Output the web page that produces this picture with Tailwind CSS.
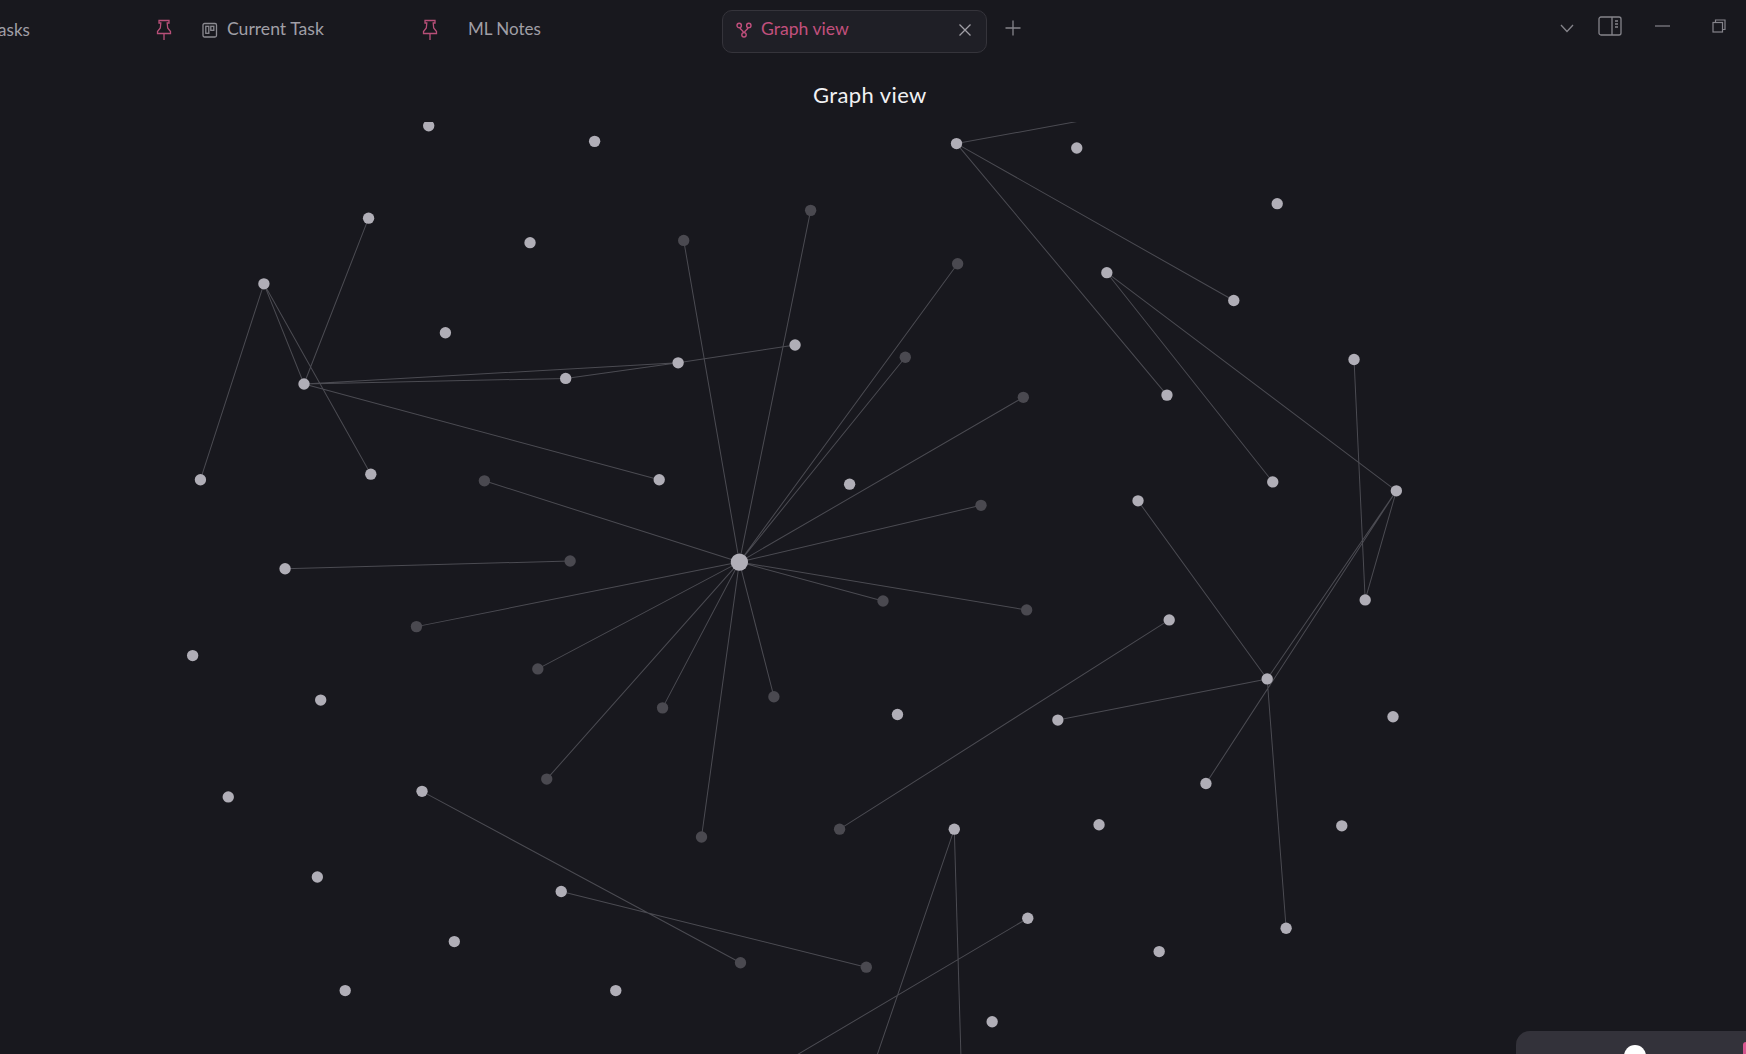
<!doctype html>
<html lang="en">
<head>
<meta charset="utf-8">
<title>Graph view</title>
<script src="https://cdn.jsdelivr.net/npm/@tailwindcss/browser@4"></script>
</head>
<body class="bg-[#18181e] overflow-hidden">
<div class="relative w-[1746px] h-[1054px] overflow-hidden bg-[#18181e] font-['Lato','Liberation_Sans',sans-serif]">

  <!-- Tab bar -->
  <div class="flex items-start h-[62px] pt-[10px] -ml-[76px] text-[17px] text-[#a09fa6]">
    <div class="flex items-center justify-between w-[266px] h-[43px] pl-[66px] pr-[18px] pb-[4px] shrink-0">
      <span>Tasks</span>
      <svg class="w-[16px] h-[22px] text-[#b84f79]" viewBox="0 0 16 22" fill="none" stroke="currentColor" stroke-width="1.300"><path d="M3 1.500h10V4h-1.800l.5 5 2.800 3.500v2H1.500v-2L4.300 9l.5-5H3zM8 14.500V21"/></svg>
    </div>
    <div class="flex items-center w-[266px] h-[43px] pl-[12px] pr-[18px] pb-[4px] shrink-0">
      <svg class="w-[16px] h-[16px] mr-[9px] mt-[1px] text-[#8b8a91]" viewBox="0 0 16 16" fill="none" stroke="currentColor" stroke-width="1.300"><rect x="1" y="1.500" width="13.500" height="13.500" rx="1.500"/><rect x="3.800" y="4.300" width="3" height="7"/><rect x="8.800" y="4.300" width="3" height="4"/></svg>
      <span class="text-[17.600px]">Current Task</span>
      <svg class="ml-auto w-[16px] h-[22px] text-[#b84f79]" viewBox="0 0 16 22" fill="none" stroke="currentColor" stroke-width="1.300"><path d="M3 1.500h10V4h-1.800l.5 5 2.800 3.500v2H1.500v-2L4.300 9l.5-5H3zM8 14.500V21"/></svg>
    </div>
    <div class="flex items-center w-[266px] h-[43px] pl-[12px] pb-[5px] shrink-0"><span>ML Notes</span></div>
    <div class="flex items-center w-[265px] h-[43px] pl-[13px] pr-[14px] pb-[4px] shrink-0 rounded-[10px] border border-[#35343b] bg-[#1f1f26] text-[#c2507d]">
      <svg class="w-[16px] h-[16px] mr-[9px]" viewBox="0 0 16 16" fill="none" stroke="currentColor" stroke-width="1.400"><circle cx="3.200" cy="3.400" r="2.200"/><circle cx="12.800" cy="3.400" r="2.200"/><circle cx="8" cy="12.800" r="2.200"/><path d="M3.800 5.500C4.500 8 7 8 7.600 10.600M12.200 5.500C11.500 8 9 8 8.400 10.600"/></svg>
      <span class="text-[17.600px]">Graph view</span>
      <svg class="ml-auto w-[14px] h-[14px] text-[#a09fa6]" viewBox="0 0 14 14" fill="none" stroke="currentColor" stroke-width="1.300"><path d="M1.500 1.500l11 11M12.500 1.500l-11 11"/></svg>
    </div>
    <button class="ml-[18px] mt-[10px] w-[16px] h-[16px] text-[#85848b]">
      <svg viewBox="0 0 16 16" fill="none" stroke="currentColor" stroke-width="1.300"><path d="M8 0.500v15M0.500 8h15"/></svg>
    </button>
    <div class="ml-auto flex items-center h-[32px] pr-[20px] text-[#85848b]">
      <svg class="w-[14px] h-[9px] mr-[24px] mt-[4px]" viewBox="0 0 14 9" fill="none" stroke="currentColor" stroke-width="1.300"><path d="M1 1l6 6.500L13 1"/></svg>
      <svg class="w-[24px] h-[20px] mr-[33px]" viewBox="0 0 24 20" fill="none" stroke="currentColor" stroke-width="1.300"><rect x="1" y="1" width="22" height="18" rx="2"/><path d="M14 1v18M17 5h3M17 8h3M17 11h3"/></svg>
      <svg class="w-[15px] h-[2px] mr-[42px]" viewBox="0 0 15 2" fill="none" stroke="currentColor" stroke-width="1.200"><path d="M0 1h15"/></svg>
      <svg class="w-[14px] h-[14px]" viewBox="0 0 14 14" fill="none" stroke="currentColor" stroke-width="1.200"><rect x="1" y="3.500" width="9.500" height="9.500"/><path d="M3.500 3.500V1H13v9.500h-2.500"/></svg>
    </div>
  </div>

  <!-- View title -->
  <h1 class="ml-[813px] mt-[17px] w-[125px] h-[40px] text-[22px] leading-[32px] tracking-[0.4px] text-[#f1f1f3] font-normal whitespace-nowrap">Graph view</h1>

  <!-- Graph canvas -->
  <svg class="absolute left-0 top-[122px] w-[1746px] h-[932px]" viewBox="0 109.600 1568 837.400" preserveAspectRatio="none" fill="none">
    <g stroke="#4b4b52" stroke-width="0.900">
      <path d="M664 505L614 216M664 505L728 189M664 505L860 237M664 505L813 321M664 505L919 357M664 505L881 454M664 505L922 548M664 505L793 540M664 505L695 626M664 505L630 752M664 505L595 636M664 505L491 700M664 505L483 601M664 505L374 563M664 505L435 432"/>
      <path d="M237 255L180 431M237 255L273 345M237 255L333 426M331 196L273 345M273 345L592 431M273 345L508 340M273 345L609 326M508 340L609 326M609 326L714 310"/>
      <path d="M256 511L512 504"/>
      <path d="M859 129L1004 102.400M859 129L1108 270M859 129L1048 355"/>
      <path d="M994 245L1143 433M994 245L1254 441"/>
      <path d="M1216 323L1226 539M1254 441L1226 539M1254 441L1138 610M1254 441L1083 704M1022 450L1138 610M950 647L1138 610M1138 610L1155 834M1050 557L754 745"/>
      <path d="M857 745L787 950M857 745L863 950M923 825L712 950"/>
      <path d="M379 711L665 865M504 801L778 869"/>
    </g>
    <g fill="#b0aeb7">
      <circle cx="664" cy="505" r="7.800"/>
      <circle cx="385" cy="113" r="5.100"/><circle cx="534" cy="127" r="5.100"/><circle cx="859" cy="129" r="5.100"/><circle cx="967" cy="133" r="5.100"/><circle cx="1147" cy="183" r="5.100"/><circle cx="331" cy="196" r="5.100"/><circle cx="476" cy="218" r="5.100"/><circle cx="237" cy="255" r="5.100"/><circle cx="994" cy="245" r="5.100"/><circle cx="1108" cy="270" r="5.100"/><circle cx="400" cy="299" r="5.100"/><circle cx="714" cy="310" r="5.100"/><circle cx="609" cy="326" r="5.100"/><circle cx="508" cy="340" r="5.100"/><circle cx="273" cy="345" r="5.100"/><circle cx="1216" cy="323" r="5.100"/><circle cx="1048" cy="355" r="5.100"/><circle cx="180" cy="431" r="5.100"/><circle cx="333" cy="426" r="5.100"/><circle cx="592" cy="431" r="5.100"/><circle cx="763" cy="435" r="5.100"/><circle cx="1143" cy="433" r="5.100"/><circle cx="1254" cy="441" r="5.100"/><circle cx="1022" cy="450" r="5.100"/><circle cx="256" cy="511" r="5.100"/><circle cx="1226" cy="539" r="5.100"/><circle cx="1050" cy="557" r="5.100"/><circle cx="173" cy="589" r="5.100"/><circle cx="288" cy="629" r="5.100"/><circle cx="1138" cy="610" r="5.100"/><circle cx="806" cy="642" r="5.100"/><circle cx="950" cy="647" r="5.100"/><circle cx="1251" cy="644" r="5.100"/><circle cx="1083" cy="704" r="5.100"/><circle cx="205" cy="716" r="5.100"/><circle cx="379" cy="711" r="5.100"/><circle cx="857" cy="745" r="5.100"/><circle cx="987" cy="741" r="5.100"/><circle cx="1205" cy="742" r="5.100"/><circle cx="285" cy="788" r="5.100"/><circle cx="504" cy="801" r="5.100"/><circle cx="923" cy="825" r="5.100"/><circle cx="1155" cy="834" r="5.100"/><circle cx="408" cy="846" r="5.100"/><circle cx="1041" cy="855" r="5.100"/><circle cx="310" cy="890" r="5.100"/><circle cx="553" cy="890" r="5.100"/><circle cx="891" cy="918" r="5.100"/>
    </g>
    <g fill="#4a4950">
      <circle cx="614" cy="216" r="5.100"/><circle cx="728" cy="189" r="5.100"/><circle cx="860" cy="237" r="5.100"/><circle cx="813" cy="321" r="5.100"/><circle cx="919" cy="357" r="5.100"/><circle cx="881" cy="454" r="5.100"/><circle cx="922" cy="548" r="5.100"/><circle cx="793" cy="540" r="5.100"/><circle cx="695" cy="626" r="5.100"/><circle cx="630" cy="752" r="5.100"/><circle cx="595" cy="636" r="5.100"/><circle cx="491" cy="700" r="5.100"/><circle cx="483" cy="601" r="5.100"/><circle cx="374" cy="563" r="5.100"/><circle cx="435" cy="432" r="5.100"/><circle cx="512" cy="504" r="5.100"/><circle cx="754" cy="745" r="5.100"/><circle cx="665" cy="865" r="5.100"/><circle cx="778" cy="869" r="5.100"/>
    </g>
  </svg>

  <!-- Controls panel peeking in at the corner -->
  <div class="absolute left-[1516px] top-[1031px] w-[260px] h-[60px] rounded-tl-[14px] bg-[#33323a]">
    <div class="absolute left-[108px] top-[14px] w-[22px] h-[22px] rounded-full bg-white"></div>
    <div class="absolute left-[227px] top-[11px] w-[10px] h-[30px] rounded-[3px] bg-[#d9558f]"></div>
  </div>
</div>
</body>
</html>
